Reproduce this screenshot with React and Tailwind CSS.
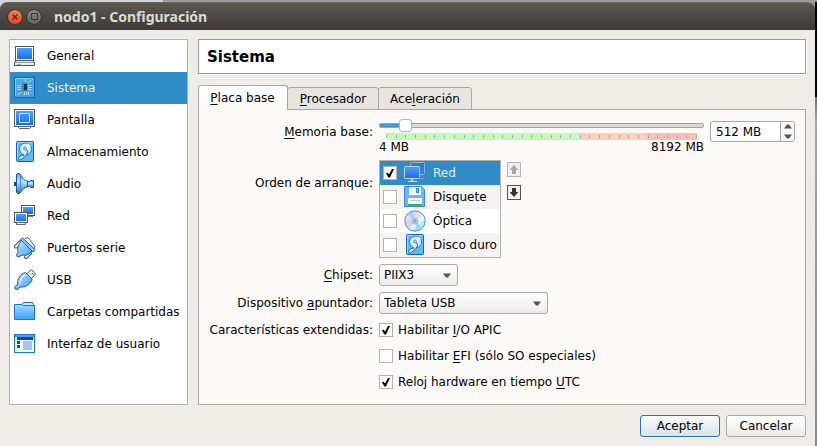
import { useState } from "react";

const LINE = "#1560b8";

function Gradients() {
  return (
    <svg className="absolute h-0 w-0" aria-hidden="true">
      <defs>
        <linearGradient id="screen" x1="0" y1="0" x2="0" y2="1">
          <stop offset="0" stopColor="#4aa2fb" />
          <stop offset="1" stopColor="#1a6ce8" />
        </linearGradient>
        <linearGradient id="sky" x1="0" y1="0" x2="1" y2="1">
          <stop offset="0" stopColor="#c4ebff" />
          <stop offset="1" stopColor="#3a9bf3" />
        </linearGradient>
        <linearGradient id="folder" x1="0" y1="0" x2="0" y2="1">
          <stop offset="0" stopColor="#a2dcff" />
          <stop offset="1" stopColor="#3aa0fb" />
        </linearGradient>
        <linearGradient id="cone" x1="0" y1="0" x2="0" y2="1">
          <stop offset="0" stopColor="#4fa6ea" />
          <stop offset="0.4" stopColor="#bfe6fc" />
          <stop offset="1" stopColor="#1d72c8" />
        </linearGradient>
        <linearGradient id="disc" x1="0" y1="0" x2="1" y2="1">
          <stop offset="0" stopColor="#c8ecff" />
          <stop offset="0.35" stopColor="#e9d3fb" />
          <stop offset="0.6" stopColor="#d2fbe0" />
          <stop offset="1" stopColor="#8cc8fb" />
        </linearGradient>
      </defs>
    </svg>
  );
}

function Svg({ children }) {
  return (
    <svg viewBox="0 0 22 22" className="h-[22px] w-[22px] shrink-0" aria-hidden="true">
      {children}
    </svg>
  );
}

function GeneralIcon() {
  return (
    <Svg>
      <rect x="1.5" y="1.5" width="18" height="14" fill="#fff" stroke="#555" />
      <rect x="3" y="3" width="15" height="11" fill="url(#screen)" />
      <path d="M2.5 15.5h16l2 2v3H.5v-3z" fill="#ececec" stroke="#555" />
      <path d="M1 17.5h19" stroke="#999" />
      <path d="M3 19.5h4" stroke="#aaa" />
    </Svg>
  );
}

function SystemIcon() {
  return (
    <Svg>
      <rect x="0.5" y="0.5" width="20" height="20" fill="#4aa6ec" stroke="#1862ae" />
      <path d="M1.5 19V1.5H19" fill="none" stroke="#8accfa" />
      <rect x="8" y="6" width="5" height="8" fill="#5d7f9a" />
      <rect x="10" y="7" width="3" height="6" fill="#16344e" />
      <path d="M3 8.5h4M3 10.500h4M3 12.500h4M14 8.500h3M14 10.500h4M14 12.500h3" stroke="#b4dcf8" />
      <path d="M11.500 2v3M14 6l3-3M10.500 15v3M12.500 15v3M14.500 15v3M4 18l3-3" stroke="#b4dcf8" />
    </Svg>
  );
}

function DisplayIcon() {
  return (
    <Svg>
      <rect x="0.5" y="0.5" width="20" height="17" fill="#f2f2f2" stroke="#555" />
      <rect x="2" y="2" width="17" height="14" fill="url(#screen)" />
      <rect x="5.5" y="4.5" width="10" height="9" fill="none" stroke="#c8e4fd" />
      <path d="M3.5 17.5h14l-2 2h-10z" fill="#f4f4f4" stroke="#666" />
    </Svg>
  );
}

function StorageIcon() {
  return (
    <Svg>
      <rect x="2.5" y="0.5" width="17" height="20" rx="1" fill="#62bafb" stroke={LINE} />
      <path d="M3.5 19V1.5H18" fill="none" stroke="#a8dcff" />
      <circle cx="11.5" cy="8" r="6" fill="#d6effe" stroke="#2377c8" />
      <path d="M11.500 8L17 5a6 6 0 0 0-4-2.500z" fill="#fff" />
      <circle cx="11" cy="7.500" r="1.500" fill="#a5d5f8" stroke="#2377c8" strokeWidth=".7" />
      <path d="M12.500 8.500q2.500 2.500 0 5.500l-5 4.500c-2.500 1-4-1-2.500-2.500q2.500-2 5-2" fill="#cdeafe" stroke={LINE} />
    </Svg>
  );
}

function AudioIcon() {
  return (
    <Svg>
      <path d="M1 9v4" stroke="#10559c" strokeWidth="2" />
      <path d="M2.5 1.500l1-1h2l2 2.500c1 3 3 4.500 6 5v6c-3 .500-5 2-6 4l-2 2.500h-2l-1-1z" fill="url(#cone)" stroke="#1259a8" />
      <path d="M6.500 3v16" stroke="#3c8bd4" />
      <path d="M13.500 8.500h2l1-1h3v7h-3l-1-1h-2z" fill="url(#cone)" stroke="#1259a8" />
    </Svg>
  );
}

function NetworkIcon() {
  return (
    <Svg>
      <rect x="7.5" y="0.5" width="13" height="10" fill="#fff" stroke="#555" />
      <rect x="9" y="2" width="10" height="7" fill="url(#screen)" />
      <path d="M14 11.500h5" stroke="#777" />
      <rect x="0.5" y="7.5" width="13" height="10" fill="#fff" stroke="#555" />
      <rect x="2" y="9" width="10" height="7" fill="url(#screen)" />
      <path d="M2.5 17.500h9v2h-9z" fill="#eee" stroke="#666" />
    </Svg>
  );
}

function SerialIcon() {
  return (
    <Svg>
      <path d="M11 1.5l3-1 7 9-1 2.500" fill="#f3f3f3" stroke="#555" />
      <path d="M2 9.500l5-5M12 20l4-4" stroke="#555" strokeWidth="4" strokeLinecap="round" />
      <path d="M2 9.500l5-5M12 20l4-4" stroke="#eee" strokeWidth="2" strokeLinecap="round" />
      <path d="M7.500 3.500L18 14c-2.500 3.500-5.500 4.500-9 4l-2 .500-2 1.500-2-.500-.500-2L4 15.500c-1-4.500.500-8 3.500-12z" fill="url(#sky)" stroke={LINE} />
      <path d="M6.500 2.500l2-1.500L21 12.500l-2 2.500z" fill="#8ccbfa" stroke={LINE} />
    </Svg>
  );
}

function UsbIcon() {
  return (
    <Svg>
      <path d="M12.5 5l5-4.500 4 4.500-4.500 5z" fill="#f4f4f4" stroke="#555" />
      <path d="M16 4.500l1 1M18 4l1.500 1.500" stroke="#444" />
      <path d="M11.500 3.500l6.500 6.500c0 4-6 8.500-11 8l-2 .500-1.500 2-2.500-.500-.500-2L3.500 15.500c-.500-5 3-11 8-12z" fill="url(#sky)" stroke={LINE} />
      <path d="M11 6c-3 1.500-5 5-5 8.500" fill="none" stroke="#dcf3ff" strokeWidth="1.500" />
    </Svg>
  );
}

function FolderIcon() {
  return (
    <Svg>
      <path d="M7.5 4l2-2.500h9l1 2V7h-12z" fill="#cdecff" stroke="#2273c8" />
      <path d="M.5 3.500h7l2 1h11v14H.500z" fill="url(#folder)" stroke="#2273c8" />
    </Svg>
  );
}

function InterfaceIcon() {
  return (
    <Svg>
      <rect x="0.5" y="1.5" width="20" height="18" fill="#f2f8ff" stroke="#1c74d2" />
      <rect x="1" y="2" width="19" height="2" fill="#4aa2f3" />
      <rect x="3" y="4" width="16" height="3" fill="#0b4aa6" />
      <rect x="3" y="8" width="3" height="3" fill="#0b4aa6" />
      <rect x="3" y="12" width="3" height="3" fill="#0b4aa6" />
      <rect x="9" y="8" width="9" height="9" fill="#9fc6fc" />
    </Svg>
  );
}

function BootNetIcon() {
  return (
    <Svg>
      <rect x="6.5" y="0.5" width="14" height="12" rx="1" fill="#2f80d6" stroke="#8fb0c8" />
      <path d="M15 16.500h5" stroke="#8fa9bc" />
      <rect x="0.5" y="4.5" width="15" height="12" rx="1" fill="url(#screen)" stroke="#c3d2dc" />
      <path d="M8 17v2" stroke="#b3c4d0" strokeWidth="3" />
      <path d="M4 19.500h9" stroke="#d6dfe6" />
    </Svg>
  );
}

function FloppyIcon() {
  return (
    <Svg>
      <path d="M.5.500h17l3 3v17H.500z" fill="#6bb6fb" stroke="#3c8ae4" />
      <rect x="5" y="1" width="12" height="8" fill="#eef7fd" />
      <rect x="12.500" y="2.500" width="2" height="4" fill="#7db8ee" stroke="#3a86d8" />
      <rect x="4" y="12" width="14" height="8" fill="#f6f9fc" />
      <path d="M6 14.500h10" stroke="#c3ccd4" />
      <rect x="4" y="18" width="14" height="2" fill="#35b54a" />
    </Svg>
  );
}

function OpticalIcon() {
  return (
    <Svg>
      <circle cx="11" cy="11" r="10.200" fill="url(#disc)" stroke="#3c8ee0" />
      <path d="M11 11L4 4a9 9 0 0 1 5-2.500zM11 11l7 7a9 9 0 0 1-5 2.500z" fill="#8fd0ff" opacity=".8" />
      <path d="M11 11l8-5a9 9 0 0 1 1.500 5z" fill="#fff" opacity=".8" />
      <path d="M11 11l-9 1a9 9 0 0 0 3 6z" fill="#f0b5f0" opacity=".7" />
      <circle cx="11" cy="11" r="3" fill="#d6e8f6" stroke="#8fb5da" />
      <circle cx="11" cy="11" r="1.200" fill="#fff" stroke="#5b7fa4" />
    </Svg>
  );
}

const sections = [
  ["General", GeneralIcon],
  ["Sistema", SystemIcon],
  ["Pantalla", DisplayIcon],
  ["Almacenamiento", StorageIcon],
  ["Audio", AudioIcon],
  ["Red", NetworkIcon],
  ["Puertos serie", SerialIcon],
  ["USB", UsbIcon],
  ["Carpetas compartidas", FolderIcon],
  ["Interfaz de usuario", InterfaceIcon],
];

const bootDevices = [
  ["Red", BootNetIcon, true],
  ["Disquete", FloppyIcon, false],
  ["Óptica", OpticalIcon, false],
  ["Disco duro", StorageIcon, false],
];

function Key({ children }) {
  return <span className="underline decoration-1 underline-offset-2">{children}</span>;
}

function Check({ id, checked, label }) {
  return (
    <span className="grid h-[14px] w-[14px] shrink-0">
      <input
        id={id}
        type="checkbox"
        defaultChecked={checked}
        aria-label={label}
        className="peer col-start-1 row-start-1 h-[14px] w-[14px] appearance-none border border-[#b5b1ae] bg-white"
      />
      <svg viewBox="0 0 14 14" className="pointer-events-none invisible col-start-1 row-start-1 h-[14px] w-[14px] peer-checked:visible" aria-hidden="true">
        <path d="M3 7.500l1.500-1 1.500 2L9 3h2L7 11.500H5.500z" fill="#000" />
      </svg>
    </span>
  );
}

function Select({ id, value, className }) {
  return (
    <span className={"grid h-[22px] " + className}>
      <select
        id={id}
        defaultValue={value}
        className="col-start-1 row-start-1 h-[22px] w-full appearance-none rounded-[3px] border border-[#aba7a3] bg-linear-to-b from-white to-[#ecebe8] pr-5 pl-1 text-[12px] leading-[18px]"
      >
        <option>{value}</option>
      </select>
      <svg viewBox="0 0 8 5" className="pointer-events-none col-start-1 row-start-1 mr-[7px] h-[5px] w-[8px] self-center justify-self-end" aria-hidden="true">
        <path d="M0 .500h8L5 4.500H3z" fill="#555" />
      </svg>
    </span>
  );
}

function ArrowIcon({ className }) {
  return (
    <svg viewBox="0 0 8 9" className={"h-[9px] w-2 " + className} aria-hidden="true">
      <path d="M4 0l4 4.500V5H6v4H2V5H0v-.500z" fill="currentColor" />
    </svg>
  );
}

function MemoryScale() {
  return (
    <svg viewBox="0 0 311 7" preserveAspectRatio="none" className="mx-[7px] h-[7px] w-[311px]" aria-hidden="true">
      <rect width="193" height="7" fill="#c0fbbb" />
      <rect x="193" width="68" height="7" fill="#fcd0b9" />
      <rect x="261" width="50" height="7" fill="#fdbbba" />
      {Array.from({ length: 33 }, (_, i) => (
        <rect key={i} x={Math.round((i * 310) / 32)} y="2" width="1" height="3" fill="#aba59f" />
      ))}
    </svg>
  );
}

export default function App() {
  const [memory, setMemory] = useState(512);
  const filled = ((memory - 4) / 8188) * 100;
  return (
    <div className="flex min-h-screen flex-col bg-[#8f8f8d] text-[12px] leading-4 text-black [font-family:'DejaVu_Sans',sans-serif]">
      <Gradients />
      <div className="flex flex-1 bg-linear-to-r from-[#d2d3d7] from-20% to-[#9a9a9a] to-20% pt-[2px]">
        <div className="flex flex-1 flex-col rounded-t-[7px] bg-[#efebe7]">
          <header className="flex h-7 items-center rounded-t-[7px] border-t border-[#6b6860] bg-linear-to-b from-[#5a5850] to-[#3d3b37] pl-[7px]">
            <button aria-label="Cerrar" className="grid h-4 w-4 place-items-center rounded-full border border-[#34322e] bg-linear-to-b from-[#f5814f] to-[#df4a16]">
              <svg viewBox="0 0 6 6" className="h-[6px] w-[6px]" aria-hidden="true">
                <path d="M.500.500l5 5M5.500.500l-5 5" stroke="#5b2412" strokeWidth="1.200" />
              </svg>
            </button>
            <button aria-label="Maximizar" className="ml-[3px] grid h-4 w-4 place-items-center rounded-full border border-[#34322e] bg-linear-to-b from-[#8b8981] to-[#64625c]">
              <span className="h-[7px] w-[7px] border border-[#3a3834]" />
            </button>
            <h1 className="ml-3 text-[14px] font-bold text-[#dfdbd2] [font-family:'Noto_Sans',sans-serif]">nodo1 - Configuración</h1>
          </header>

          <div className="flex flex-1 gap-[10px] px-[9px] pt-[9px] pb-[10px]">
            <nav className="flex w-[179px] shrink-0 flex-col border border-[#b5b1ad] bg-white">
              {sections.map(([name, Icon]) => (
                <a
                  key={name}
                  href="#"
                  className={"flex h-8 items-center gap-[11px] pl-1 " + (name === "Sistema" ? "bg-[#308cc6] text-[#eef6fc]" : "")}
                >
                  <Icon />
                  {name}
                </a>
              ))}
            </nav>

            <main className="flex min-w-0 flex-1 flex-col">
              <h2 className="flex h-[35px] items-center border border-[#9a9894] bg-white pl-2 text-[15px] font-bold shadow-[1px_1px_0_#fff]">Sistema</h2>

              <div role="tablist" className="z-10 mt-[11px] -mb-px flex items-end">
                <button role="tab" aria-selected="true" className="h-[25px] w-[90px] rounded-t-[3px] border border-b-0 border-[#aaa6a3] bg-linear-to-b from-white to-[#fdf9f6] pr-px">
                  <Key>P</Key>laca base
                </button>
                <button role="tab" aria-selected="false" className="-ml-px h-[23px] w-[92px] rounded-t-[3px] border border-[#aaa6a3] bg-[#e8e5e1]">
                  <Key>P</Key>rocesador
                </button>
                <button role="tab" aria-selected="false" className="-ml-px h-[23px] w-[94px] rounded-t-[3px] border border-[#aaa6a3] bg-[#e8e5e1]">
                  Ace<Key>l</Key>eración
                </button>
              </div>

              <section className="grid min-h-[295px] flex-1 grid-cols-[164px_1fr] content-start gap-x-[6px] border border-[#aaa6a3] bg-[#fdf9f6] pt-2 pl-[10px]">
                <label htmlFor="memory" className="pt-[6px] text-right">
                  <Key>M</Key>emoria base:
                </label>
                <div className="flex h-[42px] gap-[6px]">
                  <div className="flex w-[325px] flex-col">
                    <input
                      id="memory"
                      type="range"
                      min="4"
                      max="8192"
                      value={memory}
                      onChange={(e) => setMemory(Number(e.target.value))}
                      style={{ "--filled": filled + "%" }}
                      className="block h-[15px] w-full appearance-none bg-transparent [&::-webkit-slider-runnable-track]:h-[5px] [&::-webkit-slider-runnable-track]:rounded-[2px] [&::-webkit-slider-runnable-track]:border [&::-webkit-slider-runnable-track]:border-[#a5a19d] [&::-webkit-slider-runnable-track]:bg-[linear-gradient(to_right,#3d9bdc_var(--filled),#dcd9d5_var(--filled))] [&::-webkit-slider-thumb]:-mt-[5px] [&::-webkit-slider-thumb]:h-[13px] [&::-webkit-slider-thumb]:w-[13px] [&::-webkit-slider-thumb]:appearance-none [&::-webkit-slider-thumb]:rounded-[3px] [&::-webkit-slider-thumb]:border [&::-webkit-slider-thumb]:border-[#bbb7b4] [&::-webkit-slider-thumb]:bg-white"
                    />
                    <MemoryScale />
                    <div className="flex justify-between leading-[14px]">
                      <span>4 MB</span>
                      <span>8192 MB</span>
                    </div>
                  </div>
                  <div className="mt-[3px] flex h-[21px] w-[85px] overflow-hidden rounded-[3px] border border-[#aba7a3] bg-white">
                    <input
                      aria-label="Memoria base en MB"
                      value={memory + " MB"}
                      onChange={(e) => setMemory(parseInt(e.target.value, 10) || 4)}
                      className="min-w-0 flex-1 pl-[5px]"
                    />
                    <div className="flex w-[14px] flex-col border-l border-[#aba7a3] bg-[#f7f6f4]">
                      <button aria-label="Aumentar" onClick={() => setMemory(memory + 4)} className="grid flex-1 place-items-center">
                        <svg viewBox="0 0 8 5" className="h-[5px] w-2" aria-hidden="true">
                          <path d="M0 4.500h8L5 .500H3z" fill="#555" />
                        </svg>
                      </button>
                      <button aria-label="Disminuir" onClick={() => setMemory(memory - 4)} className="grid flex-1 place-items-center">
                        <svg viewBox="0 0 8 5" className="h-[5px] w-2" aria-hidden="true">
                          <path d="M0 .500h8L5 4.500H3z" fill="#555" />
                        </svg>
                      </button>
                    </div>
                  </div>
                </div>

                <span id="boot" className="pt-[15px] text-right">Orden de arranque:</span>
                <div className="flex gap-[6px]">
                  <ul aria-labelledby="boot" className="w-[122px] border border-[#b5b1ad] bg-white">
                    {bootDevices.map(([name, Icon, on]) => (
                      <li
                        key={name}
                        className={"flex h-6 items-center pl-[3px] " + (on ? "bg-[#308cc6] text-[#e4f1fa]" : "even:bg-[#f5f3f2]")}
                      >
                        <Check checked={on} label={name} />
                        <span className="mr-[7px] ml-[7px]">
                          <Icon />
                        </span>
                        <span className="whitespace-nowrap">{name}</span>
                      </li>
                    ))}
                  </ul>
                  <div className="flex flex-col gap-2 pt-[2px]">
                    <button disabled aria-label="Subir" className="grid h-[15px] w-[14px] place-items-center border border-[#b9b5b2] bg-[#f1efed]">
                      <ArrowIcon className="text-[#a9a6a3]" />
                    </button>
                    <button aria-label="Bajar" className="grid h-[15px] w-[14px] place-items-center border border-[#55524f] bg-[#f1efed]">
                      <ArrowIcon className="rotate-180 text-[#333]" />
                    </button>
                  </div>
                </div>

                <label htmlFor="chipset" className="pt-[9px] text-right">
                  <Key>C</Key>hipset:
                </label>
                <div className="flex pt-[6px]">
                  <Select id="chipset" value="PIIX3" className="w-[79px]" />
                </div>

                <label htmlFor="pointer" className="pt-[9px] text-right">
                  Dispositivo <Key>a</Key>puntador:
                </label>
                <div className="flex pt-[6px]">
                  <Select id="pointer" value="Tableta USB" className="w-[169px]" />
                </div>

                <span id="features" className="pt-2 text-right whitespace-nowrap">Características extendidas:</span>
                <div role="group" aria-labelledby="features" className="flex flex-col gap-[10px] pt-2">
                  <label className="flex items-center gap-[5px]">
                    <Check checked />
                    <span>Habilitar <Key>I</Key>/O APIC</span>
                  </label>
                  <label className="flex items-center gap-[5px]">
                    <Check checked={false} />
                    <span>Habilitar <Key>E</Key>FI (sólo SO especiales)</span>
                  </label>
                  <label className="flex items-center gap-[5px]">
                    <Check checked />
                    <span>Reloj hardware en tiempo <Key>U</Key>TC</span>
                  </label>
                </div>
              </section>
            </main>
          </div>

          <footer className="flex justify-end gap-[6px] pr-[9px] pb-[9px]">
            <button className="h-[22px] w-20 rounded-[3px] border border-[#2a73a4] bg-linear-to-b from-[#fafcfc] to-[#dbe3e5]">Aceptar</button>
            <button className="h-[22px] w-20 rounded-[3px] border border-[#aba7a3] bg-linear-to-b from-white to-[#ecebe8]">Cancelar</button>
          </footer>
        </div>
        <div className="w-[2px] bg-[linear-gradient(to_bottom,#000_95px,#6f6f6d_95px,#a5a5a4_120px,#8b8b89)]" />
      </div>
    </div>
  );
}
